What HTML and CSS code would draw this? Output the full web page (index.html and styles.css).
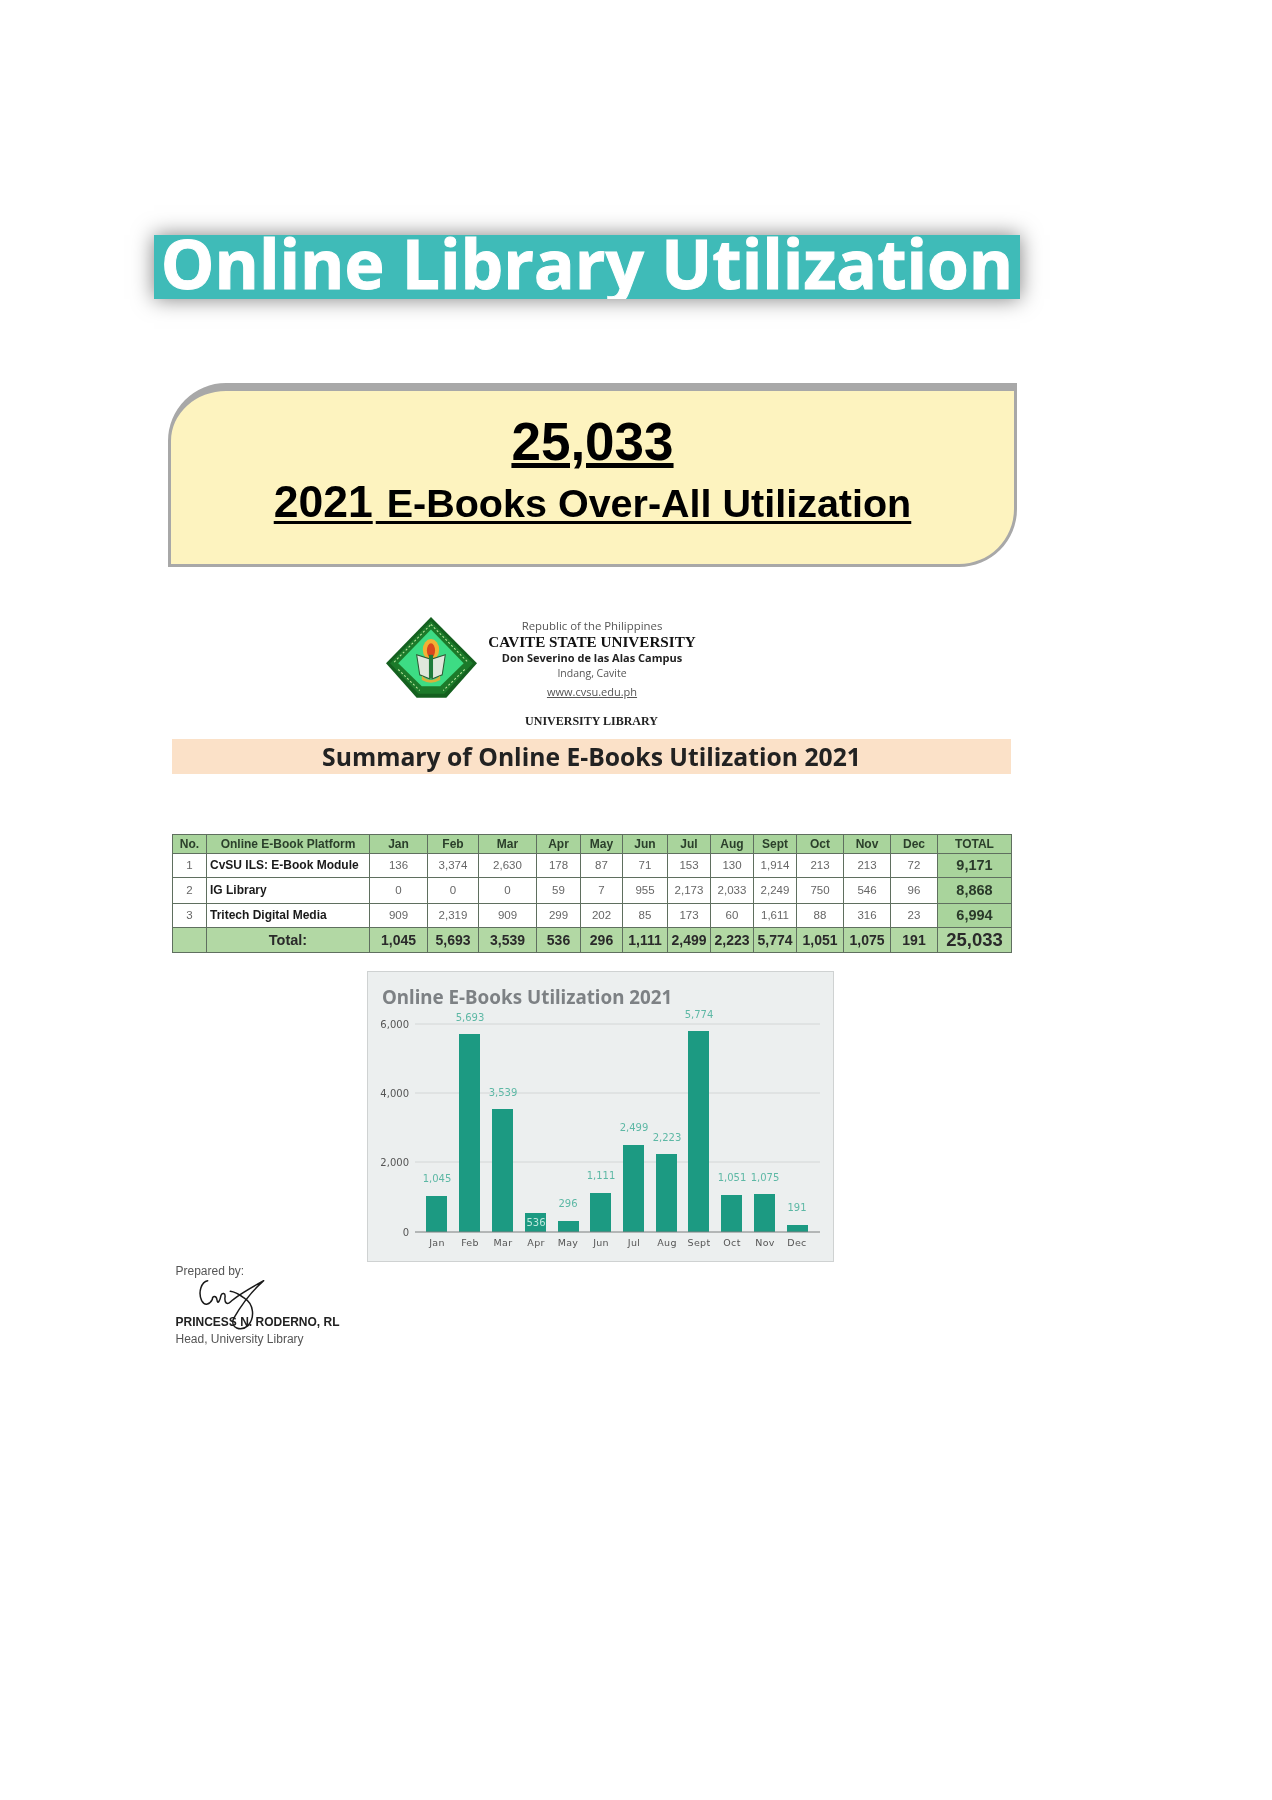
FILE: index.html
```html
<!DOCTYPE html>
<html lang="en">
<head>
<meta charset="utf-8">
<title>Online Library Utilization</title>
<link rel="stylesheet" href="styles.css">
</head>
<body>
<main class="page">
  <h1 class="banner"><span>Online Library Utilization</span></h1>

  <section class="card">
    <div class="card-num">25,033</div>
    <div class="card-sub"><span class="yr">2021</span> E-Books Over-All Utilization</div>
  </section>

  <header class="letterhead">
    <svg class="seal" viewBox="0 0 90 80" width="92" height="84" preserveAspectRatio="none" aria-hidden="true">
      <polygon points="44,0 89,44 59,77 30,77 0,44" fill="#14601f"/>
      <polygon points="44,4 85,44 57,73 32,73 4,44" fill="#1c7a2a"/>
      <polygon points="44,12 76,44 53,66 35,66 12,44" fill="#3ddc84"/>
      <path d="M44 7 L80 43 M8 43 L44 7 M12 50 L33 70 M77 50 L56 70" stroke="#bfe6a0" stroke-width="1" stroke-dasharray="2 2" fill="none"/>
      <ellipse cx="44" cy="31" rx="8" ry="10" fill="#f2b134"/>
      <ellipse cx="44" cy="32" rx="4" ry="7" fill="#d9461e"/>
      <path d="M30 36 L43 40 V59 L33 55 Z" fill="#dfe7dc" stroke="#2b5a33"/>
      <path d="M58 36 L45 40 V59 L55 55 Z" fill="#dfe7dc" stroke="#2b5a33"/>
      <rect x="42" y="36" width="4" height="22" fill="#1f7a3a"/>
      <path d="M35 56 Q44 64 53 56 L53 60 Q44 65 35 60 Z" fill="#d9b13a"/>
    </svg>
    <div class="lh-text">
      <div class="lh-rep">Republic of the Philippines</div>
      <div class="lh-uni">CAVITE STATE UNIVERSITY</div>
      <div class="lh-campus">Don Severino de las Alas Campus</div>
      <div class="lh-town">Indang, Cavite</div>
      <div class="lh-web">www.cvsu.edu.ph</div>
    </div>
  </header>
  <div class="lib">UNIVERSITY LIBRARY</div>

  <h2 class="band">Summary of Online E-Books Utilization 2021</h2>

  <table class="data">
    <thead>
      <tr><th>No.</th><th>Online E-Book Platform</th><th>Jan</th><th>Feb</th><th>Mar</th><th>Apr</th><th>May</th><th>Jun</th><th>Jul</th><th>Aug</th><th>Sept</th><th>Oct</th><th>Nov</th><th>Dec</th><th>TOTAL</th></tr>
    </thead>
    <tbody>
      <tr class="r1"><td>1</td><td class="name">CvSU ILS: E-Book Module</td><td>136</td><td>3,374</td><td>2,630</td><td>178</td><td>87</td><td>71</td><td>153</td><td>130</td><td>1,914</td><td>213</td><td>213</td><td>72</td><td class="tot">9,171</td></tr>
      <tr class="r2"><td>2</td><td class="name">IG Library</td><td>0</td><td>0</td><td>0</td><td>59</td><td>7</td><td>955</td><td>2,173</td><td>2,033</td><td>2,249</td><td>750</td><td>546</td><td>96</td><td class="tot">8,868</td></tr>
      <tr class="r1"><td>3</td><td class="name">Tritech Digital Media</td><td>909</td><td>2,319</td><td>909</td><td>299</td><td>202</td><td>85</td><td>173</td><td>60</td><td>1,611</td><td>88</td><td>316</td><td>23</td><td class="tot">6,994</td></tr>
    </tbody>
    <tfoot>
      <tr><td></td><td class="total-label">Total:</td><td>1,045</td><td>5,693</td><td>3,539</td><td>536</td><td>296</td><td>1,111</td><td>2,499</td><td>2,223</td><td>5,774</td><td>1,051</td><td>1,075</td><td>191</td><td class="grand">25,033</td></tr>
    </tfoot>
  </table>

  <figure class="chart">
    <svg viewBox="0 0 466 291" width="466" height="291">
      <text class="c-title" x="15" y="33">Online E-Books Utilization 2021</text>
      <g class="grid">
        <line x1="48" x2="453" y1="53" y2="53"/>
        <line x1="48" x2="453" y1="122" y2="122"/>
        <line x1="48" x2="453" y1="191" y2="191"/>
      </g>
      <g class="ylab">
        <text x="42" y="57">6,000</text>
        <text x="42" y="126">4,000</text>
        <text x="42" y="195">2,000</text>
        <text x="42" y="265">0</text>
      </g>
      <g class="bars">
        <rect x="59" y="225" width="21" height="36"/>
        <rect x="92" y="63" width="21" height="198"/>
        <rect x="125" y="138" width="21" height="123"/>
        <rect x="158" y="242" width="21" height="19"/>
        <rect x="191" y="250" width="21" height="11"/>
        <rect x="223" y="222" width="21" height="39"/>
        <rect x="256" y="174" width="21" height="87"/>
        <rect x="289" y="183" width="21" height="78"/>
        <rect x="321" y="60" width="21" height="201"/>
        <rect x="354" y="224" width="21" height="37"/>
        <rect x="387" y="223" width="21" height="38"/>
        <rect x="420" y="254" width="21" height="7"/>
      </g>
      <line class="axis" x1="48" x2="453" y1="261" y2="261"/>
      <g class="vals">
        <text x="70" y="211">1,045</text>
        <text x="103" y="50">5,693</text>
        <text x="136" y="125">3,539</text>
        <text class="inside" x="169" y="255">536</text>
        <text x="201" y="236">296</text>
        <text x="234" y="208">1,111</text>
        <text x="267" y="160">2,499</text>
        <text x="300" y="170">2,223</text>
        <text x="332" y="47">5,774</text>
        <text x="365" y="210">1,051</text>
        <text x="398" y="210">1,075</text>
        <text x="430" y="240">191</text>
      </g>
      <g class="xlab">
        <text x="70" y="275">Jan</text>
        <text x="103" y="275">Feb</text>
        <text x="136" y="275">Mar</text>
        <text x="169" y="275">Apr</text>
        <text x="201" y="275">May</text>
        <text x="234" y="275">Jun</text>
        <text x="267" y="275">Jul</text>
        <text x="300" y="275">Aug</text>
        <text x="332" y="275">Sept</text>
        <text x="365" y="275">Oct</text>
        <text x="398" y="275">Nov</text>
        <text x="430" y="275">Dec</text>
      </g>
    </svg>
  </figure>

  <footer class="sign">
    <div class="sign-prep">Prepared by:</div>
    <div class="sign-name">PRINCESS N. RODERNO, RL</div>
    <div class="sign-role">Head, University Library</div>
    <svg class="sig" viewBox="0 0 600 330" width="200" height="110" aria-hidden="true">
      <path d="M128 92 C110 95 98 125 110 152 C120 170 135 162 142 148 C142 138 154 135 156 150 C158 165 165 152 168 136 C172 128 182 128 180 142 C178 158 186 166 196 156 C212 140 260 112 296 92 C270 115 232 160 206 205 C194 234 228 246 250 226 C270 202 266 162 240 146 C226 136 214 126 196 124" fill="none" stroke="#1a1a1a" stroke-width="4.5" stroke-linecap="round" stroke-linejoin="round"/>
    </svg>
  </footer>
</main>
</body>
</html>
```
FILE: styles.css
```css
* { box-sizing: border-box; }
html, body { margin: 0; padding: 0; background: #fff; }
.page {
  width: 1272px;
  height: 1800px;
  padding-top: 235px;
  font-family: "Liberation Sans", Arial, sans-serif;
  overflow: hidden;
  filter: blur(.45px);
}
.banner {
  margin: 0 0 0 154px;
  width: 866px;
  height: 64px;
  background: #3fbbb8;
  box-shadow: 0 0 20px rgba(0, 0, 0, .5);
  overflow: hidden;
  color: #fff;
  text-align: center;
  font: 700 67.5px/57px "Open Sans", sans-serif;
  -webkit-text-stroke: 1px #fff;
  white-space: nowrap;
}
.card {
  margin: 84px 0 0 168px;
  width: 849px;
  height: 184px;
  background: #fdf3bf;
  border-style: solid;
  border-color: #a8a8a8;
  border-width: 8px 3px 3px 3px;
  border-radius: 58px 0 58px 0;
  text-align: center;
  color: #000;
  font-weight: 700;
  padding-top: 20px;
}
.card-num {
  font-size: 53px;
  line-height: 62px;
  text-decoration: underline;
  text-decoration-thickness: 5px;
  text-underline-offset: 3px;
}
.card-sub {
  font-size: 39.5px;
  line-height: 52px;
  margin-top: 3px;
  text-decoration: underline;
  text-decoration-thickness: 3px;
  text-underline-offset: 4px;
}
.yr { font-size: 44.5px; margin-right: 3px; }
.letterhead {
  display: flex;
  margin: 50px 0 0 386px;
  height: 82px;
  align-items: flex-start;
}
.lh-text {
  width: 260px;
  margin-top: 1px;
  text-align: center;
  color: #333;
}
.seal { flex: none; margin-right: -16px; }
.lh-rep { font: 400 11.4px/16px "Open Sans", sans-serif; color: #555; }
.lh-uni { font: 700 15.2px/15px "Liberation Serif", serif; color: #111; }
.lh-campus { font: 700 11px/17px "Open Sans", sans-serif; color: #222; }
.lh-town { font: 400 10.5px/15px "Open Sans", sans-serif; color: #555; }
.lh-web { font: 400 11px/22px "Open Sans", sans-serif; color: #555; text-decoration: underline; }
.lib {
  margin: 14px 0 0 172px;
  width: 839px;
  text-align: center;
  font: 700 12px/16px "Liberation Serif", serif;
  color: #222;
}
.band {
  margin: 10px 0 0 172px;
  width: 839px;
  height: 35px;
  background: #fbe1c8;
  color: #222;
  text-align: center;
  font: 700 24.7px/35px "Open Sans", sans-serif;
}
.data {
  margin: 60px 0 0 172px;
  width: 839px;
  border-collapse: collapse;
  table-layout: fixed;
  font-size: 11.5px;
  color: #666;
  text-align: center;
}
.data th, .data td { border: 1px solid #5f6f5f; padding: 0 0 1px; overflow: hidden; white-space: nowrap; }
.data th:nth-child(1) { width: 34px; }
.data th:nth-child(2) { width: 163px; }
.data th:nth-child(3) { width: 58px; }
.data th:nth-child(4) { width: 51px; }
.data th:nth-child(5) { width: 58px; }
.data th:nth-child(6) { width: 44px; }
.data th:nth-child(7) { width: 42px; }
.data th:nth-child(8) { width: 45px; }
.data th:nth-child(9) { width: 43px; }
.data th:nth-child(10) { width: 43px; }
.data th:nth-child(11) { width: 43px; }
.data th:nth-child(12) { width: 47px; }
.data th:nth-child(13) { width: 47px; }
.data th:nth-child(14) { width: 47px; }
.data th:nth-child(15) { width: 74px; }
.data thead tr { height: 19px; }
.data .r1 { height: 24px; }
.data .r2 { height: 26px; }
.data th { background: #a9d49c; color: #2b3f2b; font-weight: 700; font-size: 12px; }
.data .name { text-align: left; padding-left: 3px; color: #1a1a1a; font-weight: 700; font-size: 12px; }
.data .tot { background: #a9d49c; color: #2a3a2a; font-weight: 700; font-size: 14.5px; }
.data tfoot tr { height: 25px; }
.data tfoot td { background: #b2d8a4; color: #2a2a2a; font-weight: 700; font-size: 14px; }
.data .total-label { font-size: 14.5px; }
.data .grand { font-size: 18.5px; }
.chart {
  margin: 18px 0 0 367px;
  width: 467px;
  height: 291px;
  background: #ecefef;
  box-shadow: inset 0 0 0 1px #cfd2d2;
}
.chart svg { display: block; }
.c-title { font: 700 18.8px "Noto Sans", sans-serif; fill: #7d8184; }
.grid line { stroke: #d3d6d6; stroke-width: 1; }
.axis { stroke: #7a7f7f; stroke-width: 1; }
.ylab text { font: 10px "DejaVu Sans", sans-serif; fill: #555; text-anchor: end; }
.xlab text { font: 9.5px "DejaVu Sans", sans-serif; fill: #555; text-anchor: middle; letter-spacing: .3px; }
.bars rect { fill: #1c9a82; }
.vals text { font: 10px "DejaVu Sans", sans-serif; fill: #5db8a5; text-anchor: middle; }
.vals .inside { fill: #bfe8dd; }
.sign {
  position: relative;
  margin: 0 0 0 175.5px;
  padding-top: 1px;
  width: 200px;
  font-size: 12px;
  color: #555;
}
.sign-prep { line-height: 16px; }
.sign-name { margin-top: 35px; font-weight: 700; color: #222; line-height: 16px; white-space: nowrap; }
.sign-role { line-height: 18px; }
.sig { position: absolute; left: -11px; top: -12px; }
```
